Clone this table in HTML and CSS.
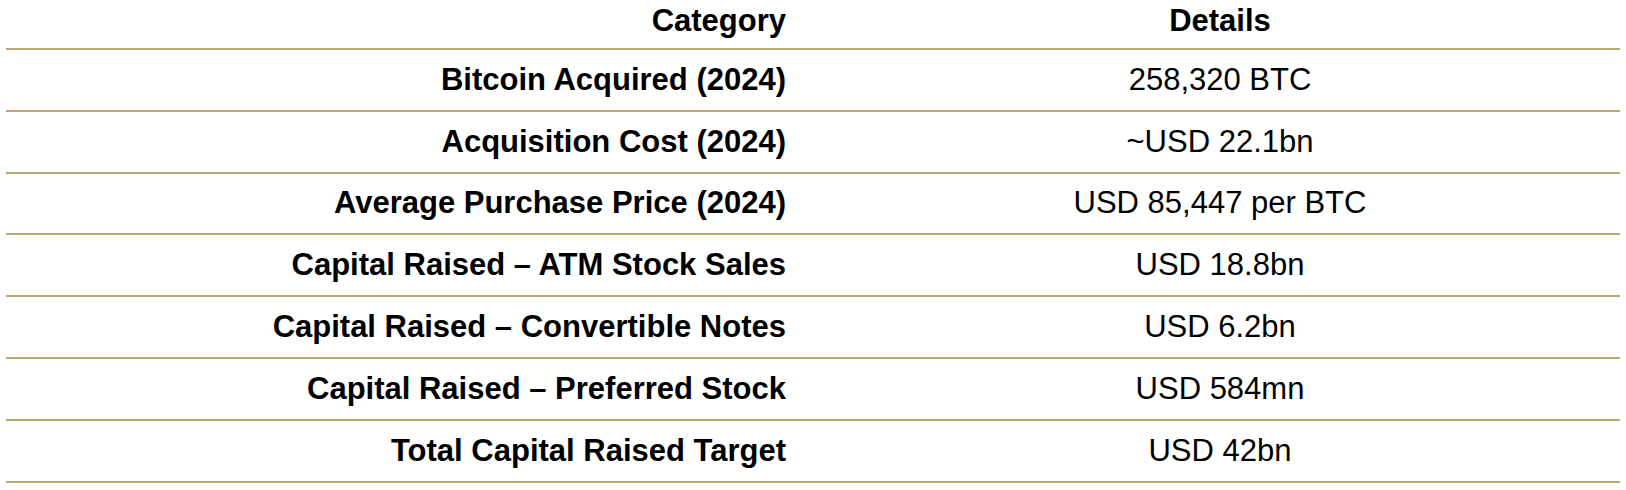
FILE: index.html
```html
<!DOCTYPE html>
<html>
<head>
<meta charset="utf-8">
<link rel="stylesheet" href="styles.css">
</head>
<body>
<table class="data">
  <thead>
    <tr><th class="cat">Category</th><th class="det">Details</th></tr>
  </thead>
  <tbody>
    <tr><td class="cat">Bitcoin Acquired (2024)</td><td class="det">258,320 BTC</td></tr>
    <tr><td class="cat">Acquisition Cost (2024)</td><td class="det">~USD 22.1bn</td></tr>
    <tr><td class="cat">Average Purchase Price (2024)</td><td class="det">USD 85,447 per BTC</td></tr>
    <tr><td class="cat">Capital Raised – ATM Stock Sales</td><td class="det">USD 18.8bn</td></tr>
    <tr><td class="cat">Capital Raised – Convertible Notes</td><td class="det">USD 6.2bn</td></tr>
    <tr><td class="cat">Capital Raised – Preferred Stock</td><td class="det">USD 584mn</td></tr>
    <tr><td class="cat">Total Capital Raised Target</td><td class="det">USD 42bn</td></tr>
  </tbody>
</table>
</body>
</html>
```
FILE: styles.css
```css
html, body {
  margin: 0;
  padding: 0;
  background: #ffffff;
}
body {
  padding: 0 6px;
  font-family: "Liberation Sans", Arial, Helvetica, sans-serif;
  color: #000000;
}
.data {
  width: 100%;
  border-collapse: collapse;
  font-size: 31px;
}
.data th, .data td {
  border-bottom: 2px solid #bba671;
  padding: 0;
}
.data thead th {
  height: 42px;
  padding-bottom: 6px;
  font-weight: bold;
  vertical-align: middle;
}
.data tbody td {
  height: 59.8px;
  vertical-align: middle;
}
.data .cat {
  width: 780px;
  text-align: right;
  padding-right: 34px;
  font-weight: bold;
}
.data .det {
  text-align: center;
  font-weight: normal;
}
.data thead .det {
  font-weight: bold;
}
```
